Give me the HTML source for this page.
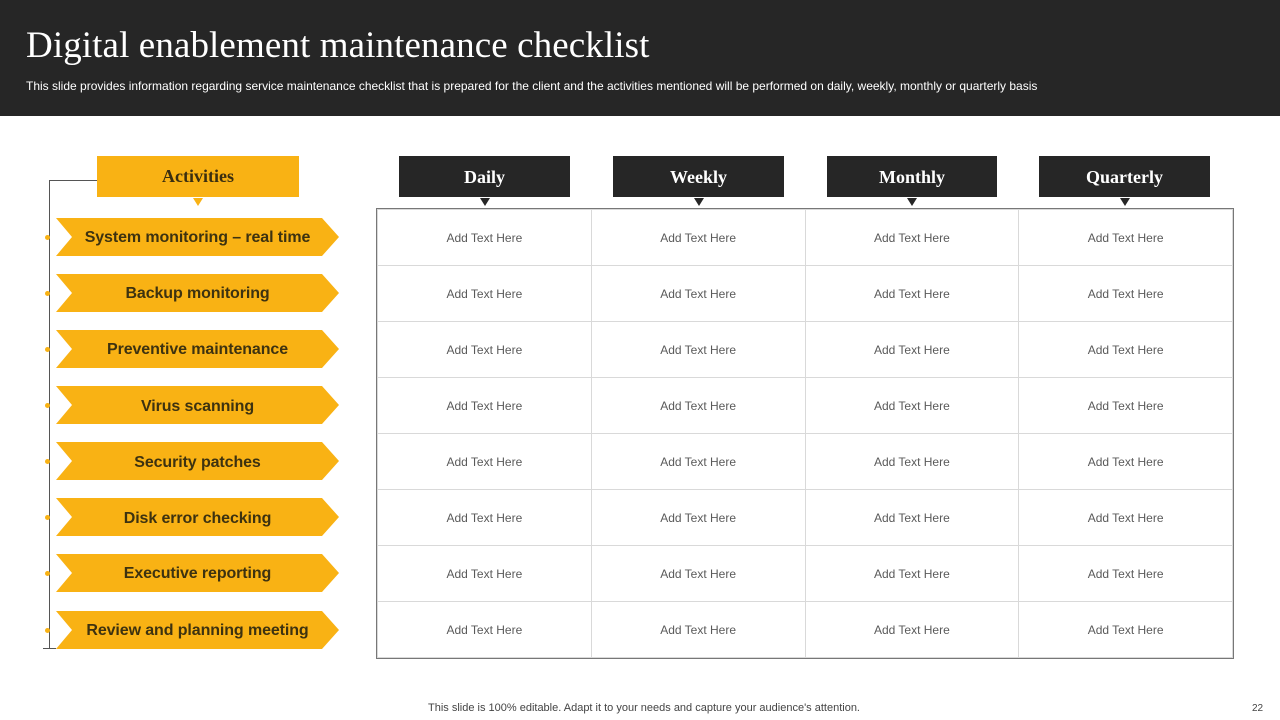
<!DOCTYPE html>
<html><head><meta charset="utf-8"><style>
*{margin:0;padding:0;box-sizing:border-box}
body{width:1280px;height:720px;position:relative;background:#fff;font-family:"Liberation Sans",sans-serif;overflow:hidden}
.hdr{position:absolute;left:0;top:0;width:1280px;height:116px;background:#262626}
.t{position:absolute;left:26px;top:24px;font:37px "Liberation Serif",serif;color:#fff;white-space:nowrap;letter-spacing:0.1px}
.s{position:absolute;left:26px;top:79px;font-size:12px;color:#fff;letter-spacing:0;white-space:nowrap}
.a{position:absolute;left:97px;top:156px;width:202px;height:41px;background:#F9B214;color:#3a2e10;font:bold 18px "Liberation Serif",serif;text-align:center;line-height:41px}
.ch{position:absolute;left:56px;width:283px;height:38px}
.ch span{position:absolute;left:0;top:0;width:283px;height:38px;line-height:40px;text-align:center;font-weight:bold;font-size:16px;color:#3d3210;letter-spacing:-0.1px}
.dot{position:absolute;left:45px;width:5px;height:5px;border-radius:50%;background:#F9B214}
.hb{position:absolute;top:156px;height:41px;background:#262626;color:#fff;font:bold 18px "Liberation Serif",serif;text-align:center;line-height:43px}
.tri{position:absolute;top:198px;width:0;height:0;border-left:5px solid transparent;border-right:5px solid transparent;border-top:8px solid #262626}
table{position:absolute;left:377px;top:209px;width:856px;height:449px;border-collapse:collapse;outline:1.5px solid #777}
td{border:1px solid #d9d9d9;width:214px;height:56px;text-align:center;font-size:12px;color:#5a5a5a}
.f{position:absolute;top:702px;left:428px;font-size:11px;color:#444}
.n{position:absolute;top:703px;left:1252px;font-size:10px;color:#444}
</style></head><body>
<div class="hdr"></div>
<div class="t">Digital enablement maintenance checklist</div>
<div class="s">This slide provides information regarding service maintenance checklist that is prepared for the client and the activities mentioned will be performed on daily, weekly, monthly or quarterly basis</div>
<div style="position:absolute;left:49px;top:180px;width:48px;height:1px;background:#555"></div>
<div style="position:absolute;left:49px;top:180px;width:1px;height:468px;background:#555"></div>
<div style="position:absolute;left:43px;top:648px;width:13px;height:1px;background:#555"></div>
<div class="a">Activities</div>
<div class="tri" style="left:193px;border-top-color:#F9B214"></div>
<svg style="position:absolute;left:0;top:0" width="400" height="720">
<g fill="#F9B214">
<polygon points="56,218 322,218 339,237 322,256 56,256 72,237"/>
<polygon points="56,274 322,274 339,293 322,312 56,312 72,293"/>
<polygon points="56,330 322,330 339,349 322,368 56,368 72,349"/>
<polygon points="56,386 322,386 339,405 322,424 56,424 72,405"/>
<polygon points="56,442 322,442 339,461 322,480 56,480 72,461"/>
<polygon points="56,498 322,498 339,517 322,536 56,536 72,517"/>
<polygon points="56,554 322,554 339,573 322,592 56,592 72,573"/>
<polygon points="56,611 322,611 339,630 322,649 56,649 72,630"/>
</g></svg>
<div class="dot" style="top:235px"></div><div class="dot" style="top:291px"></div><div class="dot" style="top:347px"></div><div class="dot" style="top:403px"></div><div class="dot" style="top:459px"></div><div class="dot" style="top:515px"></div><div class="dot" style="top:571px"></div><div class="dot" style="top:628px"></div>
<div class="ch" style="top:218px"><span>System monitoring – real time</span></div>
<div class="ch" style="top:274px"><span>Backup monitoring</span></div>
<div class="ch" style="top:330px"><span>Preventive maintenance</span></div>
<div class="ch" style="top:387px"><span>Virus scanning</span></div>
<div class="ch" style="top:443px"><span>Security patches</span></div>
<div class="ch" style="top:499px"><span>Disk error checking</span></div>
<div class="ch" style="top:554px"><span>Executive reporting</span></div>
<div class="ch" style="top:611px"><span>Review and planning meeting</span></div>
<div class="hb" style="left:399px;width:171px">Daily</div>
<div class="hb" style="left:613px;width:171px">Weekly</div>
<div class="hb" style="left:827px;width:170px">Monthly</div>
<div class="hb" style="left:1039px;width:171px">Quarterly</div>
<div class="tri" style="left:480px"></div><div class="tri" style="left:694px"></div><div class="tri" style="left:907px"></div><div class="tri" style="left:1120px"></div>
<table>
<tr><td>Add Text Here</td><td>Add Text Here</td><td>Add Text Here</td><td>Add Text Here</td></tr>
<tr><td>Add Text Here</td><td>Add Text Here</td><td>Add Text Here</td><td>Add Text Here</td></tr>
<tr><td>Add Text Here</td><td>Add Text Here</td><td>Add Text Here</td><td>Add Text Here</td></tr>
<tr><td>Add Text Here</td><td>Add Text Here</td><td>Add Text Here</td><td>Add Text Here</td></tr>
<tr><td>Add Text Here</td><td>Add Text Here</td><td>Add Text Here</td><td>Add Text Here</td></tr>
<tr><td>Add Text Here</td><td>Add Text Here</td><td>Add Text Here</td><td>Add Text Here</td></tr>
<tr><td>Add Text Here</td><td>Add Text Here</td><td>Add Text Here</td><td>Add Text Here</td></tr>
<tr><td>Add Text Here</td><td>Add Text Here</td><td>Add Text Here</td><td>Add Text Here</td></tr>
</table>
<div class="f">This slide is 100% editable. Adapt it to your needs and capture your audience's attention.</div>
<div class="n">22</div>
</body></html>
